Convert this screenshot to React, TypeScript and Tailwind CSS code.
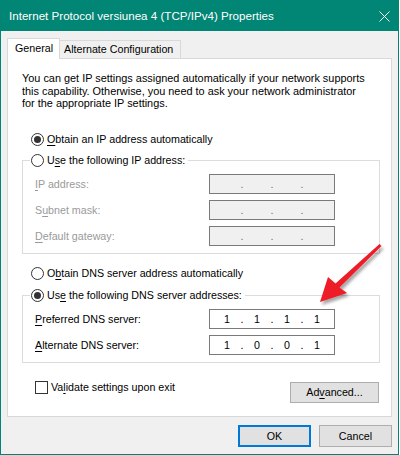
import React, { Fragment } from "react";

function Radio({ checked }: { checked?: boolean }) {
  return (
    <span className="w-[13px] h-[13px] rounded-full border border-[#333333] bg-white flex items-center justify-center shrink-0">
      {checked && <span className="w-[7px] h-[7px] rounded-full bg-[#333333]" />}
    </span>
  );
}

function RadioRow({ checked, children }: { checked?: boolean; children: React.ReactNode }) {
  return (
    <div className="flex items-center h-[13px] gap-[3px]">
      <Radio checked={checked} />
      <span className="leading-[13px] whitespace-nowrap">{children}</span>
    </div>
  );
}

function IpBox({ values, disabled }: { values?: string[]; disabled?: boolean }) {
  return (
    <div
      className={
        disabled
          ? "w-[126px] h-[20px] border border-[#7a7a7a] bg-[#f0f0f0] flex items-center pl-[5px] text-[#6d6d8d]"
          : "w-[126px] h-[20px] border border-[#7a7a7a] bg-white flex items-center pl-[5px] text-black"
      }
    >
      {[0, 1, 2, 3].map((i) => (
        <Fragment key={i}>
          {i > 0 && <span className="w-[6px] text-center leading-[18px]">.</span>}
          <span className="w-[24px] text-center leading-[18px]">{values ? values[i] : ""}</span>
        </Fragment>
      ))}
    </div>
  );
}

function Field({
  label,
  values,
  disabled,
}: {
  label: React.ReactNode;
  values?: string[];
  disabled?: boolean;
}) {
  return (
    <div className="flex items-center h-[20px]">
      <span className={disabled ? "w-[174px] text-[#9a9a9a]" : "w-[174px] text-black"}>{label}</span>
      <IpBox values={values} disabled={disabled} />
    </div>
  );
}

function U({ children }: { children: React.ReactNode }) {
  return <span className="underline underline-offset-[2px] decoration-1">{children}</span>;
}

export default function App() {
  return (
    <div className="w-[400px] h-[455px] bg-white relative font-['Liberation_Sans',Arial,sans-serif]">
      <div className="w-[399px] h-[455px] border border-[#018574] bg-[#f0f0f0] flex flex-col text-[10.7px] text-black">
        {/* Title bar */}
        <div className="h-[30px] bg-[#018574] flex items-center justify-between pl-[8px] pr-[8px] shrink-0">
          <span className="text-white text-[11.6px] whitespace-nowrap">
            Internet Protocol versiunea 4 (TCP/IPv4) Properties
          </span>
          <svg width="11" height="11" viewBox="0 0 11 11" className="shrink-0">
            <path d="M0.5 0.5 L10.5 10.5 M10.5 0.5 L0.5 10.5" stroke="white" strokeWidth="1" />
          </svg>
        </div>

        {/* Body */}
        <div className="px-[6px] flex flex-col">
          {/* Tabs */}
          <div className="h-[27px] flex items-end">
            <div className="w-[53px] h-[21px] -mb-[1px] relative z-10 bg-white border-t border-l border-r border-[#d9d9d9] pl-[7px] pb-[2px] flex items-center">
              General
            </div>
            <div className="w-[121px] h-[18px] bg-[#f0f0f0] border-t border-r border-[#d9d9d9] pl-[4px] flex items-center whitespace-nowrap">
              Alternate Configuration
            </div>
          </div>

          {/* Panel */}
          <div className="h-[359px] bg-white border border-[#d9d9d9] flex flex-col">
            <p className="mt-[13px] pl-[14px] h-[38px] text-[10.9px] leading-[12.5px] whitespace-nowrap">
              You can get IP settings assigned automatically if your network supports
              <br />
              this capability. Otherwise, you need to ask your network administrator
              <br />
              for the appropriate IP settings.
            </p>

            <div className="mt-[23px] pl-[23px]">
              <RadioRow checked>
                <U>O</U>btain an IP address automatically
              </RadioRow>
            </div>

            {/* Group 1 */}
            <div className="mt-[14px] ml-[14px] w-[358px] border border-[#dcdcdc] relative pt-[13px] pb-[7px] pl-[12px] flex flex-col gap-[6px]">
              <div className="absolute -top-[7px] left-[7px] bg-white pl-[1px] pr-[3px]">
                <RadioRow>
                  U<U>s</U>e the following IP address:
                </RadioRow>
              </div>
              <Field
                disabled
                label={
                  <>
                    <U>I</U>P address:
                  </>
                }
              />
              <Field
                disabled
                label={
                  <>
                    S<U>u</U>bnet mask:
                  </>
                }
              />
              <Field
                disabled
                label={
                  <>
                    <U>D</U>efault gateway:
                  </>
                }
              />
            </div>

            <div className="mt-[13px] pl-[23px]">
              <RadioRow>
                O<U>b</U>tain DNS server address automatically
              </RadioRow>
            </div>

            {/* Group 2 */}
            <div className="mt-[15px] ml-[14px] w-[358px] border border-[#dcdcdc] relative pt-[13px] pb-[7px] pl-[12px] flex flex-col gap-[6px]">
              <div className="absolute -top-[7px] left-[7px] bg-white pl-[1px] pr-[3px]">
                <RadioRow checked>
                  Us<U>e</U> the following DNS server addresses:
                </RadioRow>
              </div>
              <Field
                values={["1", "1", "1", "1"]}
                label={
                  <>
                    <U>P</U>referred DNS server:
                  </>
                }
              />
              <Field
                values={["1", "0", "0", "1"]}
                label={
                  <>
                    <U>A</U>lternate DNS server:
                  </>
                }
              />
            </div>

            {/* Bottom row */}
            <div className="flex items-start">
              <div className="mt-[18px] pl-[27px] flex items-center h-[13px] gap-[3px]">
                <span className="w-[13px] h-[13px] border border-[#333333] bg-white shrink-0" />
                <span className="leading-[13px] whitespace-nowrap">
                  Va<U>l</U>idate settings upon exit
                </span>
              </div>
              <button className="ml-auto mr-[12px] mt-[19px] w-[89px] h-[21px] bg-[#e1e1e1] border border-[#adadad] flex items-center justify-center">
                Ad<U>v</U>anced...
              </button>
            </div>
          </div>

          {/* Dialog buttons */}
          <div className="mt-[8px] flex justify-end gap-[8px]">
            <button className="w-[73px] h-[22px] bg-[#e1e1e1] border-2 border-[#0078d7] flex items-center justify-center">
              OK
            </button>
            <button className="w-[73px] h-[22px] bg-[#e1e1e1] border border-[#adadad] flex items-center justify-center">
              Cancel
            </button>
          </div>
        </div>
      </div>

      {/* Red annotation arrow */}
      <svg
        className="absolute left-0 top-0 pointer-events-none"
        width="400"
        height="455"
        viewBox="0 0 400 455"
      >
        <defs>
          <filter id="sh" x="-20%" y="-20%" width="150%" height="150%">
            <feDropShadow dx="2" dy="3" stdDeviation="1.8" floodColor="#000" floodOpacity="0.35" />
          </filter>
        </defs>
        <polygon
          points="320,302 328,277 335.5,283.5 379.5,244 381.5,246 339.5,287.5 347,293"
          fill="#ee1c25"
          filter="url(#sh)"
        />
      </svg>
    </div>
  );
}
